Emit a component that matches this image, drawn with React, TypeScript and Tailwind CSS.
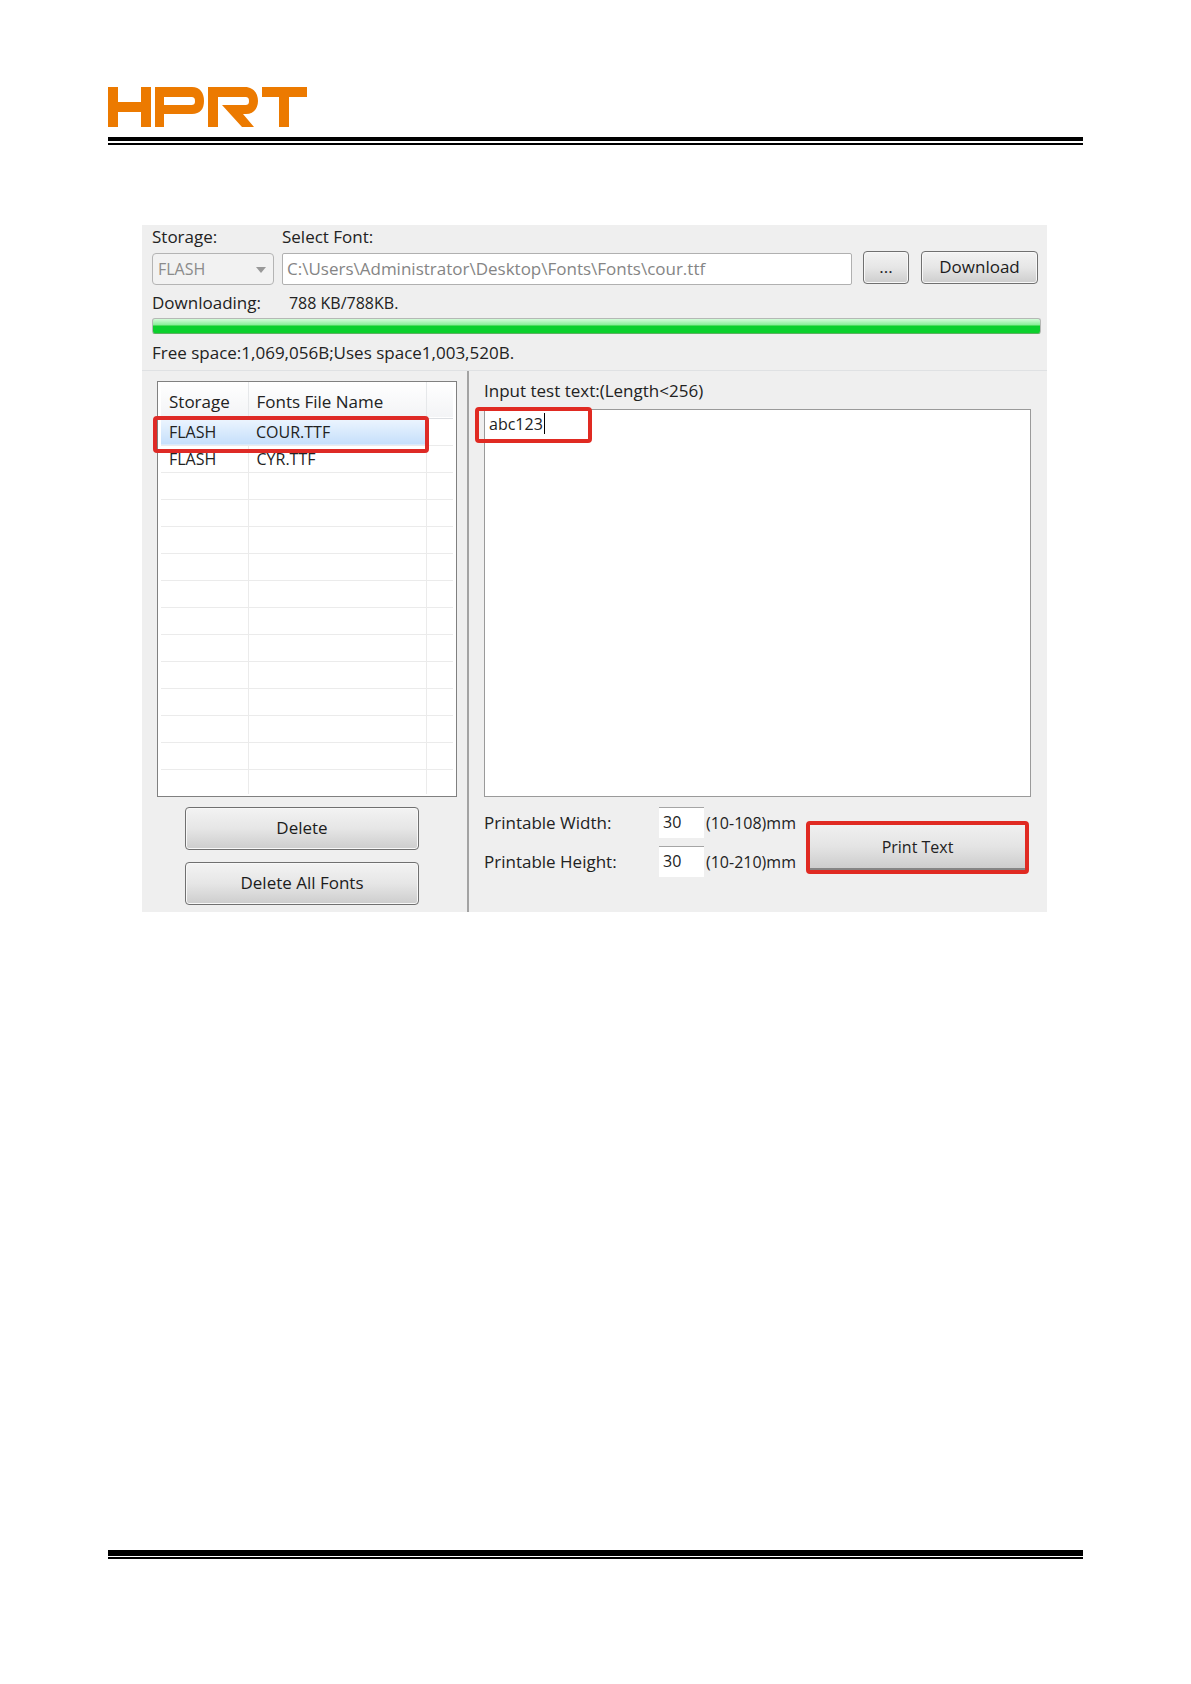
import { useState } from "react";

const fonts = [
  { storage: "FLASH", file: "COUR.TTF" },
  { storage: "FLASH", file: "CYR.TTF" },
];
const emptyRows = Array.from({ length: 12 }, (_, i) => i);

const buttonClass =
  "rounded border border-[#707070] bg-linear-to-b from-[#f3f3f3] from-0% via-[#e6e6e6] via-50% to-[#cdcdcd] pb-[2px] text-[#1c1c1c] shadow-[inset_0_0_0_1px_#f8f8f8]";

function Logo() {
  return (
    <svg width="199" height="40" viewBox="0 0 199 40" fill="#ec7a00" role="img" aria-label="HPRT">
      <path d="M0 0H10V15H33V0H43V40H33V25H10V40H0Z" />
      <path fillRule="evenodd" d="M47 0H84C92 0 96 6 96 14C96 22 92 27 84 27H56V40H47ZM56 10V18H83C86 18 87 17 87 14C87 11 86 10 83 10Z" />
      <path d="M100 0H137C145 0 150 6 150 14C150 22 145 27 138 27H135L146 40H134L114 18H137C140 18 141 17 141 14C141 11 140 10 137 10H110V40H100Z" />
      <path d="M154 0H199V10H181V40H171V10H154Z" />
    </svg>
  );
}

function SizeField({ id, label, value, range }: { id: string; label: string; value: string; range: string }) {
  return (
    <div className="flex items-center">
      <label htmlFor={id} className="w-[175px]">
        {label}
      </label>
      <input
        id={id}
        defaultValue={value}
        className="h-[31px] w-[45px] border-t border-[#a5a5a5] bg-white px-1 pb-[2px] text-base outline-none"
      />
      <span className="ml-[2px] text-base">{range}</span>
    </div>
  );
}

export default function App() {
  const [text, setText] = useState("abc123");

  return (
    <div className="flex min-h-screen flex-col bg-white px-[108px] pt-[87px] pb-[125px] font-['Open_Sans','Noto_Sans',sans-serif] text-[17px] leading-6 text-[#222]">
      <header>
        <Logo />
        <div className="mt-[10px] h-2 border-t-4 border-b-2 border-black" />
      </header>

      <main className="mt-20 mr-9 ml-[34px] bg-[#efefef]">
        <section className="border-b border-[#dfe1e3] pr-[6px] pl-[10px]">
          <div className="flex pr-[3px]">
            <div className="w-[122px]">
              <label htmlFor="storage" className="block h-7">
                Storage:
              </label>
              <div className="relative">
                <select
                  id="storage"
                  disabled
                  className="h-8 w-full appearance-none rounded border border-[#b4b4b4] bg-[#f2f2f2] px-[5px] text-base text-[#8b8b8b] opacity-100"
                >
                  <option>FLASH</option>
                </select>
                <svg className="pointer-events-none absolute top-[14px] right-2" width="10" height="6" viewBox="0 0 10 6">
                  <path d="M0 0H10L5 6Z" fill="#999" />
                </svg>
              </div>
            </div>
            <div className="ml-2 flex-1">
              <label htmlFor="path" className="block h-7">
                Select Font:
              </label>
              <input
                id="path"
                readOnly
                defaultValue="C:\Users\Administrator\Desktop\Fonts\Fonts\cour.ttf"
                className="h-8 w-full rounded-[2px] border border-[#b0b0b0] bg-white px-1 pb-[2px] text-[#858585] outline-none"
              />
            </div>
            <div className="ml-[11px] flex items-start gap-3 pt-[26px]">
              <button className={`h-[33px] w-[46px] ${buttonClass}`}>...</button>
              <button className={`h-[33px] w-[117px] ${buttonClass}`}>Download</button>
            </div>
          </div>

          <div className="mt-[6px] flex gap-7">
            <span id="downloading">Downloading:</span>
            <span className="text-base">788 KB/788KB.</span>
          </div>
          <div
            role="progressbar"
            aria-labelledby="downloading"
            aria-valuenow={100}
            className="mt-[3px] h-4 rounded-[3px] border border-[#b5b8b5] border-b-[#5fae62] bg-linear-to-b from-[#d3fbd9] from-0% via-[#8bef9b] via-40% to-[#0bd02d] to-50%"
          />
          <p className="mt-[7px] h-[29px]">Free space:1,069,056B;Uses space1,003,520B.</p>
        </section>

        <div className="flex">
          <section className="w-[327px] border-r-2 border-[#a3a3a3] pt-[10px] pr-[10px] pb-[7px] pl-[15px]">
            <div className="relative h-[416px] border border-[#808080] bg-white pr-[3px] pl-[3px]">
              <table className="w-full table-fixed border-collapse text-left text-base">
                <thead>
                  <tr className="h-9 border-b border-[#dcdfe3] bg-linear-to-b from-white to-[#f3f4f6]">
                    <th className="w-[87px] border-r border-[#e6e8ea] pt-1 pl-2 text-[17px] font-normal">Storage</th>
                    <th className="w-[178px] border-r border-[#e6e8ea] pt-1 pl-2 text-[17px] font-normal">Fonts File Name</th>
                    <th />
                  </tr>
                </thead>
                <tbody>
                  {fonts.map((f, i) => (
                    <tr key={f.file} className="h-[27px] border-b border-[#ebebeb]">
                      <td className={i === 0 ? "bg-linear-to-b from-[#edf5fe] to-[#c5dffb] p-0 pl-2" : "border-r border-[#ebebeb] p-0 pl-2"}>
                        {f.storage}
                      </td>
                      <td className={i === 0 ? "bg-linear-to-b from-[#edf5fe] to-[#c5dffb] p-0 pl-2" : "border-r border-[#ebebeb] p-0 pl-2"}>
                        {f.file}
                      </td>
                      <td />
                    </tr>
                  ))}
                  {emptyRows.map((i) => (
                    <tr key={i} className={i === 11 ? "h-[25px]" : "h-[27px] border-b border-[#ebebeb]"}>
                      <td className="border-r border-[#ebebeb]" />
                      <td className="border-r border-[#ebebeb]" />
                      <td />
                    </tr>
                  ))}
                </tbody>
              </table>
              <div className="pointer-events-none absolute top-[34px] -left-[5px] h-[37px] w-[276px] rounded border-4 border-[#de2a26]" />
            </div>
            <div className="mt-[10px] ml-7 flex w-[234px] flex-col gap-3">
              <button className={`h-[43px] ${buttonClass}`}>Delete</button>
              <button className={`h-[43px] ${buttonClass}`}>Delete All Fonts</button>
            </div>
          </section>

          <section className="flex-1 pt-2 pr-4 pl-[15px]">
            <label htmlFor="test-text" className="block h-[30px]">
              Input test text:(Length&lt;256)
            </label>
            <div className="relative">
              <textarea
                id="test-text"
                value={text}
                onChange={(e) => setText(e.target.value)}
                className="block h-[388px] w-full resize-none border border-[#9a9a9a] bg-white px-1 py-[2px] text-base outline-none"
              />
              <div className="pointer-events-none absolute top-1 left-[60px] h-[21px] w-px bg-black" />
              <div className="pointer-events-none absolute -top-[2px] -left-[9px] h-9 w-[117px] rounded border-4 border-[#e02a22]" />
            </div>
            <div className="flex justify-between pt-[10px]">
              <div className="flex flex-col gap-2">
                <SizeField id="print-width" label="Printable Width:" value="30" range="(10-108)mm" />
                <SizeField id="print-height" label="Printable Height:" value="30" range="(10-210)mm" />
              </div>
              <div className="mt-[14px] mr-[2px] h-[53px] w-[223px] rounded border-4 border-[#e02a22]">
                <button className="h-full w-full border-b-2 border-[#858585] bg-linear-to-b from-[#f0f0f0] via-[#e4e4e4] to-[#cdcdcd] text-base">
                  Print Text
                </button>
              </div>
            </div>
          </section>
        </div>
      </main>

      <footer className="mt-auto h-[9px] border-t-6 border-b-2 border-black" />
    </div>
  );
}
